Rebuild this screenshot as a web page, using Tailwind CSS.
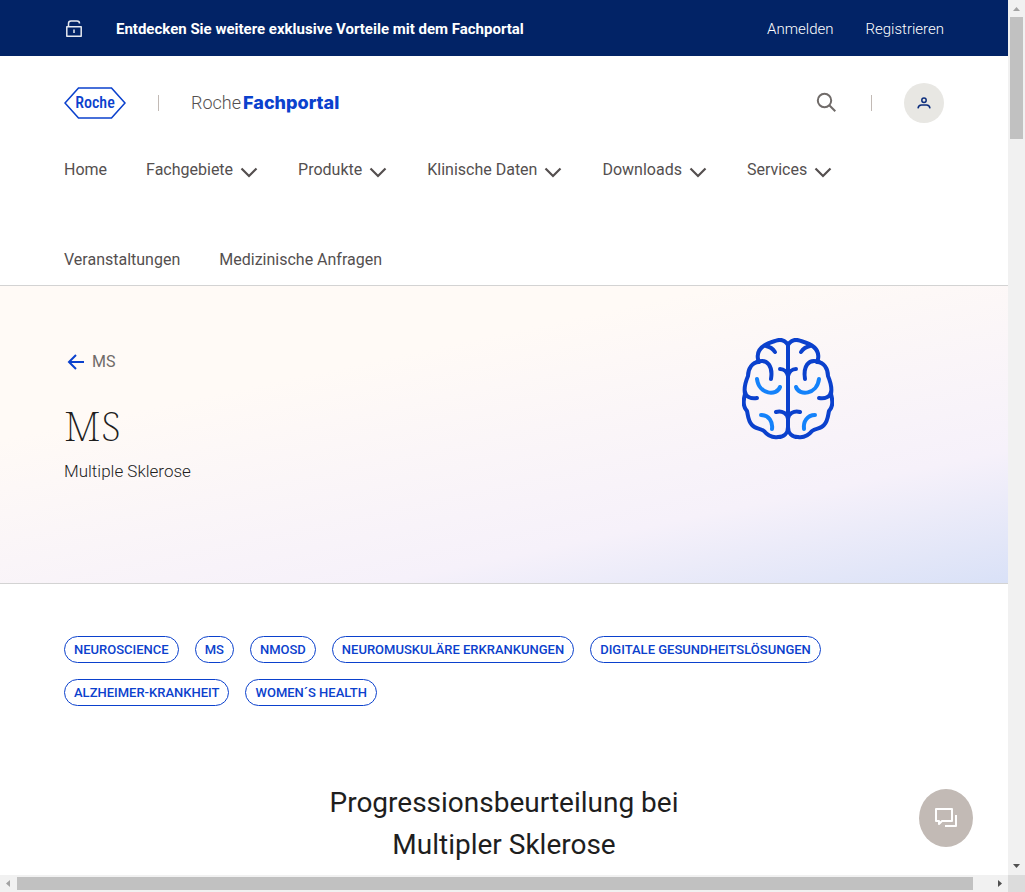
<!DOCTYPE html>
<html lang="de">
<head>
<meta charset="utf-8">
<meta name="viewport" content="width=device-width, initial-scale=1">
<title>MS | Roche Fachportal</title>
<script src="https://cdn.jsdelivr.net/npm/@tailwindcss/browser@4"></script>
</head>
<body class="flex h-screen flex-col overflow-hidden bg-white font-['Roboto','Liberation_Sans',sans-serif] text-[#1e1e1e]">
<svg class="hidden" aria-hidden="true">
  <symbol id="chevron" viewBox="0 0 24 24"><path d="M4.500 8.500 12 16l7.500-7.500" fill="none" stroke="currentColor" stroke-width="2.200"/></symbol>
  <symbol id="brain-half" viewBox="0 0 46 102">
    <g fill="none" stroke="#0b41cd" stroke-width="4" stroke-linecap="round" stroke-linejoin="round">
      <path d="M46 7C43 2 38 1 33 3C22 6 14 11 16 21L17 24C10 24 6 31 6 38C3 45 2 51 3 56C1 63 1 69 5 73C6 77 6 83 10 87C13 91 18 90 22 93C26 98 30 100 36 99C42 99 46 95 46 89"/>
      <path d="M24 8C29 9 31 11 33 14"/>
      <path d="M15 24C26 20 31 29 29 41"/>
      <path d="M38 31C42 31 45 34 46 38"/>
      <path d="M3 54C4 59 9 61 15 60"/>
      <path d="M34 74C40 72 46 76 46 81"/>
    </g>
    <g fill="none" stroke="#1482fa" stroke-width="4" stroke-linecap="round">
      <path d="M15 41C17 57 35 58 38 49"/>
      <path d="M19 77C27 77 31 84 30 91"/>
    </g>
  </symbol>
</svg>
<div class="flex min-h-0 flex-1">
  <div class="min-w-0 flex-1 overflow-hidden">
    <div class="flex h-14 items-center bg-[#022366] px-16 pt-0.5 text-[15px] text-white">
      <svg class="h-5 w-5 shrink-0" viewBox="0 0 20 20" fill="none" stroke="#e6e9f0" stroke-width="1.500" stroke-linejoin="round" aria-hidden="true"><path d="M2.800 7.800h14.400v9.400H2.800zM4.500 7.800V4.500Q4.500 2 7 2h6Q15.500 2 15.500 4.500M10 10.500v3.600"/></svg>
      <p class="ml-8 font-bold">Entdecken Sie weitere exklusive Vorteile mit dem Fachportal</p>
      <nav class="ml-auto flex gap-8 font-light" aria-label="Konto">
        <a href="#">Anmelden</a><a href="#">Registrieren</a>
      </nav>
    </div>
    <header class="border-b border-[#d3d3d3] px-16">
      <div class="flex h-[94px] items-center">
        <a href="#" class="shrink-0" aria-label="Roche Startseite">
          <svg class="h-8 w-[62px]" viewBox="0 0 62 32"><path d="M14.500 1h33L61 16 47.500 31h-33L1 16z" fill="none" stroke="#0b41cd" stroke-width="1.600"/><text x="31" y="21" text-anchor="middle" font-family="Roboto Condensed, Roboto" font-size="16" font-weight="500" fill="#0b41cd">Roche</text></svg>
        </a>
        <span class="mx-8 h-4 w-px bg-[#c2bab5]"></span>
        <a href="#" class="flex items-baseline gap-0.5 text-lg"><span class="font-light text-[#544f4f]">Roche</span><span class="font-['Inter','Roboto',sans-serif] font-extrabold text-[#0b41cd]">Fachportal</span></a>
        <button type="button" class="ml-auto" aria-label="Suche"><svg class="h-6 w-6" viewBox="0 0 24 24" fill="none" stroke="#706b69" stroke-width="2"><circle cx="9.500" cy="9.500" r="6.700"/><path d="m14.300 14.300 6 6"/></svg></button>
        <span class="mx-8 h-4 w-px bg-[#c2bab5]"></span>
        <button type="button" class="grid h-10 w-10 place-items-center rounded-full bg-[#e8e7e3]" aria-label="Profil"><svg class="h-4 w-4" viewBox="0 0 16 16" fill="none" stroke="#0b2d7c" stroke-width="1.500"><circle cx="8" cy="5.300" r="2.200"/><path d="M2 13.300C2.300 11 3.500 10 5.500 10h5c2 0 3.200 1 3.500 3.300"/></svg></button>
      </div>
      <nav class="flex flex-wrap gap-x-[39px] gap-y-16 pt-2 pb-[13px] text-base leading-6 text-[#544f4f]" aria-label="Hauptmenü">
        <a href="#">Home</a>
        <button type="button" class="flex gap-1">Fachgebiete<svg class="mt-0.5 -mr-0.5 h-6 w-6"><use href="#chevron"/></svg></button>
        <button type="button" class="flex gap-1">Produkte<svg class="mt-0.5 -mr-0.5 h-6 w-6"><use href="#chevron"/></svg></button>
        <button type="button" class="flex gap-1">Klinische Daten<svg class="mt-0.5 -mr-0.5 h-6 w-6"><use href="#chevron"/></svg></button>
        <button type="button" class="flex gap-1">Downloads<svg class="mt-0.5 -mr-0.5 h-6 w-6"><use href="#chevron"/></svg></button>
        <button type="button" class="flex gap-1">Services<svg class="mt-0.5 -mr-0.5 h-6 w-6"><use href="#chevron"/></svg></button>
        <a href="#">Veranstaltungen</a>
        <a href="#">Medizinische Anfragen</a>
      </nav>
    </header>
    <main>
      <section class="flex justify-between border-b border-[#d3d3d3] bg-[linear-gradient(168deg,#fffaf6_30%,#f6f1fa_74%,#d9e1f7_100%)] px-16 pb-[100px]">
        <div class="pt-16">
          <a href="#" class="flex items-center gap-1 text-base leading-6 text-[#706b69]"><svg class="h-6 w-6" viewBox="0 0 24 24" fill="none" stroke="#0b41cd" stroke-width="2" aria-hidden="true"><path d="M20 12H5M12 5l-7 7 7 7"/></svg>MS</a>
          <h1 class="mt-8 font-['Noto_Serif','Liberation_Serif',serif] text-[40px] leading-[40px] font-extralight">MS</h1>
          <p class="mt-[13px] text-[17px] leading-6 font-light">Multiple Sklerose</p>
        </div>
        <div class="mt-[52px] mr-[110px]" role="img" aria-label="Gehirn">
          <svg class="h-[102px] w-[92px]" viewBox="0 0 92 102"><use href="#brain-half" width="46" height="102"/><use href="#brain-half" width="46" height="102" transform="translate(92 0) scale(-1 1)"/><path d="M46 7v83" stroke="#0b41cd" stroke-width="4"/></svg>
        </div>
      </section>
      <ul class="flex flex-wrap gap-4 px-16 pt-[52px] text-[13px] font-medium text-[#0b41cd]">
        <li><a href="#" class="flex h-[27px] items-center rounded-full border border-[#0b41cd] px-[9px]">NEUROSCIENCE</a></li>
        <li><a href="#" class="flex h-[27px] items-center rounded-full border border-[#0b41cd] px-[9px]">MS</a></li>
        <li><a href="#" class="flex h-[27px] items-center rounded-full border border-[#0b41cd] px-[9px]">NMOSD</a></li>
        <li><a href="#" class="flex h-[27px] items-center rounded-full border border-[#0b41cd] px-[9px]">NEUROMUSKULÄRE ERKRANKUNGEN</a></li>
        <li><a href="#" class="flex h-[27px] items-center rounded-full border border-[#0b41cd] px-[9px]">DIGITALE GESUNDHEITSLÖSUNGEN</a></li>
        <li><a href="#" class="flex h-[27px] items-center rounded-full border border-[#0b41cd] px-[9px]">ALZHEIMER-KRANKHEIT</a></li>
        <li><a href="#" class="flex h-[27px] items-center rounded-full border border-[#0b41cd] px-[9px]">WOMEN´S HEALTH</a></li>
      </ul>
      <h2 class="mt-[76px] text-center text-[28px] leading-[42px]">Progressionsbeurteilung bei<br>Multipler Sklerose</h2>
    </main>
    <button type="button" class="fixed right-[52px] bottom-[45px] grid h-[58px] w-[54px] place-items-center rounded-[50%] bg-[#c2bab5]" aria-label="Chat"><svg class="h-6 w-6" viewBox="0 0 24 24" fill="none" stroke="#fff" stroke-width="2" stroke-linejoin="round"><path d="M2 3h16v12H8l-3 3v-3H2zM22 9v11H11"/></svg></button>
  </div>
  <div class="flex w-[17px] shrink-0 flex-col items-center bg-[#f1f1f1]" aria-hidden="true">
    <svg class="h-[17px] w-[17px] shrink-0" viewBox="0 0 17 17"><path d="M5 11h7L8.500 7z" fill="#a3a3a3"/></svg>
    <span class="h-[122px] w-[13px] bg-[#c1c1c1]"></span>
    <svg class="mt-auto h-[17px] w-[17px] shrink-0" viewBox="0 0 17 17"><path d="M5 6h7l-3.500 4z" fill="#505050"/></svg>
  </div>
</div>
<div class="flex h-[17px] shrink-0 items-center bg-[#f1f1f1]" aria-hidden="true">
  <svg class="h-[17px] w-[17px] shrink-0" viewBox="0 0 17 17"><path d="M10 5v7L6 8.500z" fill="#a3a3a3"/></svg>
  <span class="h-[13px] flex-1 bg-[#c1c1c1]"></span>
  <svg class="ml-[18px] h-[17px] w-[17px] shrink-0" viewBox="0 0 17 17"><path d="M7 5v7l4-3.500z" fill="#505050"/></svg>
  <span class="h-[17px] w-[17px] shrink-0 bg-[#dcdcdc]"></span>
</div>
</body>
</html>
